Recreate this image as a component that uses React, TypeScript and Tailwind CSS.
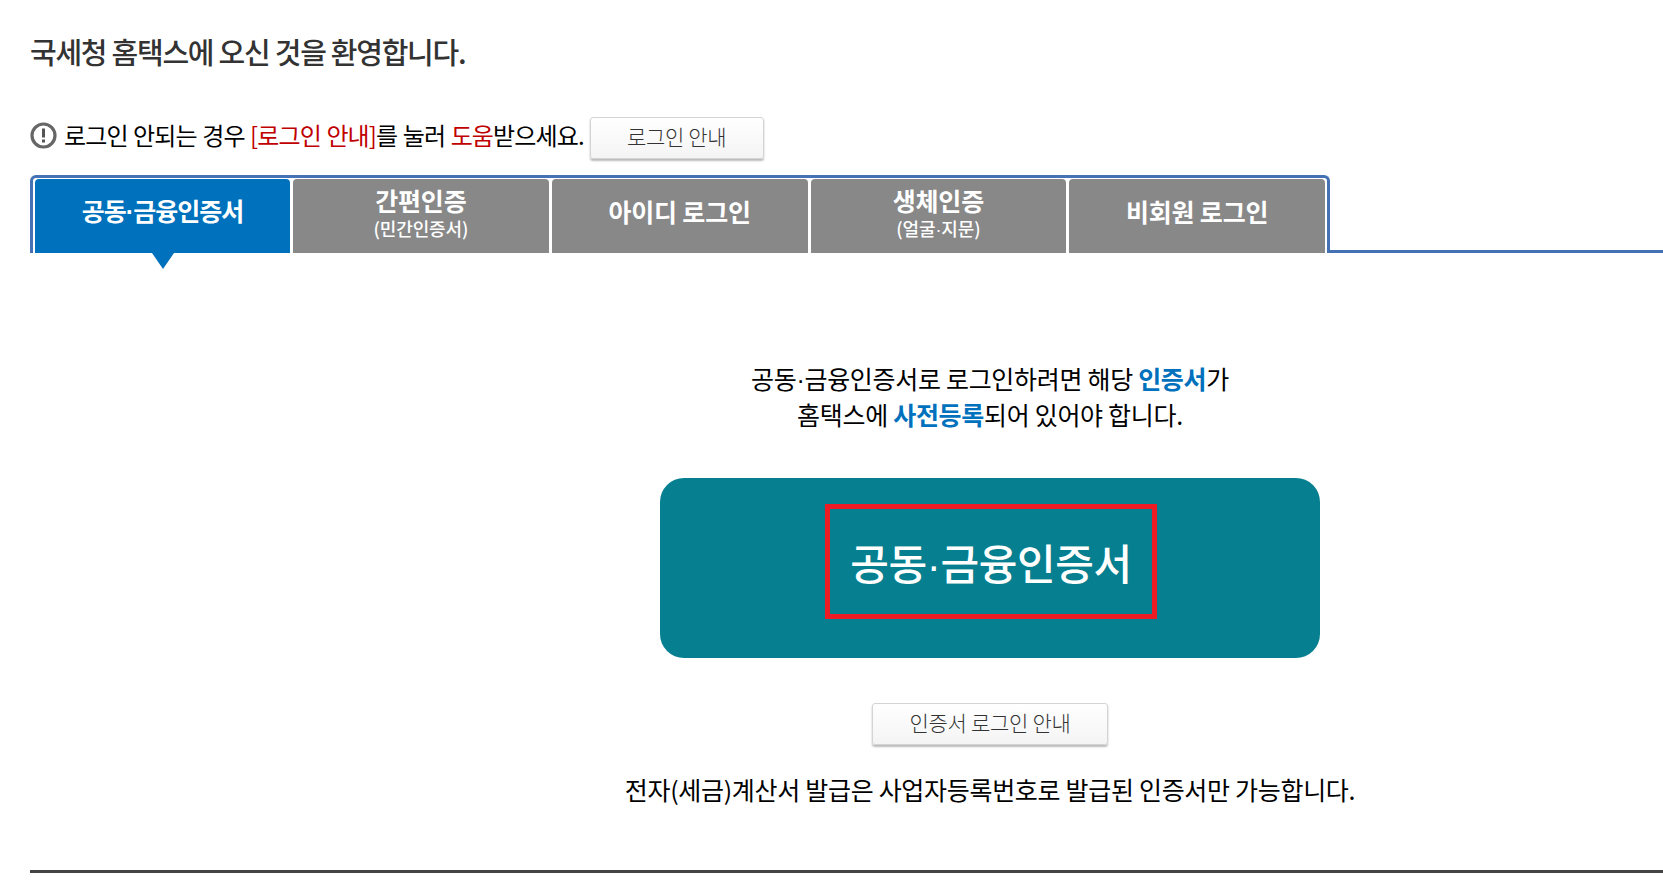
import React from "react";

// the reference's middle dot is much narrower than the Noto one
const Dot = () => <span className="font-['Liberation_Sans']">·</span>;

const tabs = [
  { title: <>공동<Dot />금융인증서</>, active: true },
  { title: "간편인증", sub: "(민간인증서)" },
  { title: "아이디 로그인" },
  { title: "생체인증", sub: <>(얼굴<Dot />지문)</> },
  { title: "비회원 로그인" },
];

const GuideButton = ({ label, className }: { label: string; className: string }) => (
  <button
    className={`h-[42px] rounded-[3px] border border-[#d4d4d4] bg-gradient-to-b from-white to-[#f4f4f4] pb-[3px] text-[21px] font-light tracking-[-0.3px] text-[#333] shadow-[0_2px_2px_#bbb] ${className}`}
  >
    {label}
  </button>
);

const App = () => {
  return (
    <div className="h-[889px] w-[1663px] overflow-hidden bg-white pl-[30px] font-['Noto_Sans_CJK_KR','Noto_Sans',sans-serif] text-black">
      <h1 className="pt-[31px] text-[29px] leading-[40px] font-medium tracking-[-1.25px] text-[#333]">
        국세청 홈택스에 오신 것을 환영합니다.
      </h1>

      <div className="mt-[46px] flex h-[42px] items-center">
        <svg width="27" height="27" viewBox="0 0 27 27" className="mb-[6px] shrink-0">
          <circle cx="13.5" cy="13.5" r="11.5" fill="none" stroke="#666" strokeWidth="3.2" />
          <rect x="12" y="6.5" width="3" height="9" fill="#555" />
          <rect x="12" y="17.5" width="3" height="3" fill="#555" />
        </svg>
        <p className="mb-[6px] ml-[7px] text-[24px] leading-[30px] tracking-[-0.88px] [word-spacing:1px]">
          로그인 안되는 경우 <span className="text-[#c00000]">[로그인 안내]</span>를 눌러{" "}
          <span className="text-[#c00000]">도움</span>받으세요.
        </p>
        <GuideButton label="로그인 안내" className="ml-[6px] w-[174px]" />
      </div>

      <div className="mt-[16px] flex border-b-[3px] border-[#4472b4]">
        <div className="-mb-[3px] flex h-[78px] gap-[3px] rounded-t-[6px] border-x-[3px] border-t-[3px] border-[#4472b4] bg-white px-[2px] pt-[1px]">
          {tabs.map((tab, i) => (
            <div
              key={i}
              className={`relative flex h-[74px] flex-col items-center rounded-t-[4px] text-white ${
                tab.active ? "w-[255px] bg-[#0071bc]" : "w-[255.75px] bg-[#888888]"
              } ${tab.sub ? "pt-[4px]" : "justify-center pb-[10px]"}`}
            >
              <span
                className={`text-[25px] leading-[34px] font-bold ${
                  tab.active ? "tracking-[-1px]" : "tracking-[-0.2px]"
                }`}
              >
                {tab.title}
              </span>
              {tab.sub && (
                <span className="text-[18px] leading-[22px] font-medium tracking-[-0.1px]">{tab.sub}</span>
              )}
              {tab.active && (
                <span className="absolute top-full left-1/2 -ml-[11px] h-0 w-0 border-x-[11px] border-t-[16px] border-x-transparent border-t-[#0071bc]" />
              )}
            </div>
          ))}
        </div>
      </div>

      <div className="ml-[630px] flex w-[660px] flex-col items-center pt-[108px]">
        <p className="text-center text-[25px] leading-[34px] tracking-[-0.3px] whitespace-nowrap">
          공동<Dot />금융인증서로 로그인하려면 해당 <b className="font-bold text-[#0071bc]">인증서</b>가
          <br />
          홈택스에 <b className="font-bold text-[#0071bc]">사전등록</b>되어 있어야 합니다.
        </p>

        <div className="mt-[47px] flex h-[180px] w-[660px] items-center justify-center rounded-[24px] bg-[#068090]">
          <div className="mb-[14px] ml-[2px] flex h-[115px] w-[332px] items-center justify-center border-[5px] border-[#ed1c24] pt-[4px] text-[42px] font-medium tracking-[-0.4px] text-white">
            <span>공동<Dot />금융인증서</span>
          </div>
        </div>

        <GuideButton label="인증서 로그인 안내" className="mt-[45px] w-[236px]" />

        <p className="mt-[24px] text-[25px] leading-[40px] tracking-[-0.3px] whitespace-nowrap">
          전자(세금)계산서 발급은 사업자등록번호로 발급된 인증서만 가능합니다.
        </p>
      </div>

      <div className="mt-[61px] h-[3px] bg-[#444]" />
    </div>
  );
};

export default App;
